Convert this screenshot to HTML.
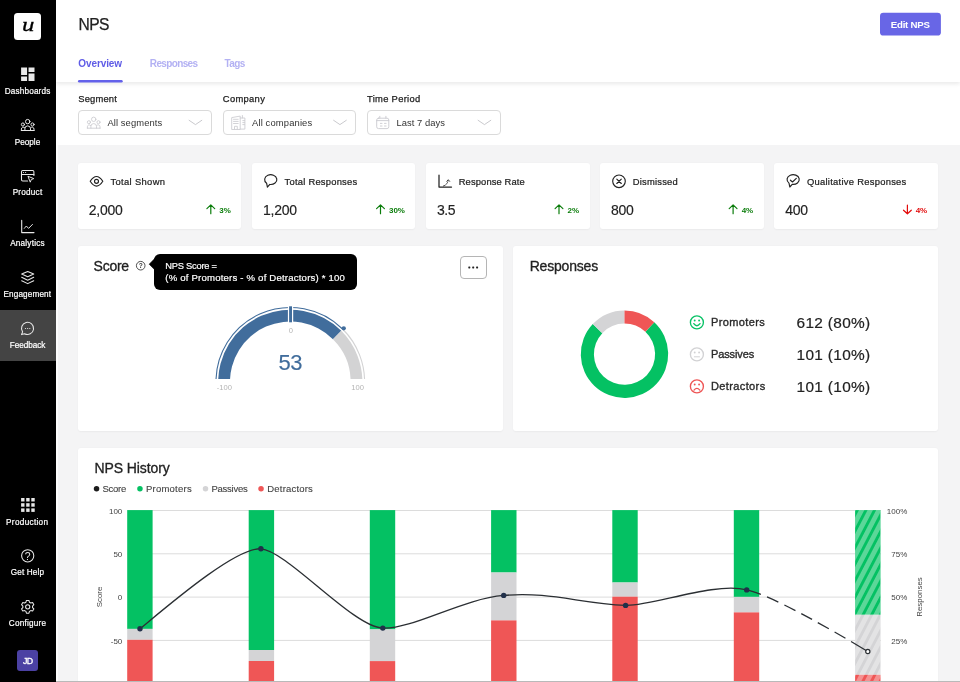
<!DOCTYPE html>
<html lang="en">
<head>
<meta charset="utf-8">
<title>NPS</title>
<style>
*{box-sizing:border-box;margin:0;padding:0}
html,body{width:960px;height:682px;overflow:hidden;background:#f4f4f5}
body{position:relative;font-family:"Liberation Sans",sans-serif;color:#222}
#wrap{position:absolute;left:0;top:0;width:960px;height:682px;will-change:transform}
.t{position:absolute;white-space:nowrap;line-height:1;z-index:6}
svg{position:absolute;overflow:visible;z-index:6}
#side{position:absolute;left:0;top:0;width:56px;height:682px;background:#000;z-index:5}
#edge{position:absolute;left:56px;top:0;width:2px;height:682px;background:#fdfdfd;z-index:1}
#active{position:absolute;left:0;top:309.5px;width:56px;height:51px;background:#444;z-index:5}
#logo{position:absolute;left:14px;top:12.6px;width:27px;height:27.2px;background:#fff;border-radius:3.5px;z-index:6}
#avatar{position:absolute;left:17.3px;top:649.5px;width:21px;height:21px;border-radius:3px;background:#4b41a3;z-index:6}
#head{position:absolute;left:56px;top:0;width:904px;height:82px;background:#fff;box-shadow:0 1.5px 4px rgba(0,0,0,.085);z-index:3}
#filters{position:absolute;left:56px;top:82px;width:904px;height:63.2px;background:#fff;z-index:2}
.sel{position:absolute;top:110px;width:133.5px;height:24.5px;border:1px solid #dadada;border-radius:4px;background:#fff;z-index:4}
.card{position:absolute;background:#fff;border-radius:3px;box-shadow:0 .5px 2px rgba(0,0,0,.045);z-index:1}
#tip{position:absolute;left:154px;top:253.5px;width:202.5px;height:36px;border-radius:6px;background:#000;z-index:6}
#more{position:absolute;left:460px;top:256px;width:26.5px;height:22.5px;border:1px solid #b5b5b5;border-radius:4px;background:#fff;z-index:6}
#bottomline{position:absolute;left:56px;top:680.6px;width:904px;height:1.4px;background:#b9b9b9;z-index:7}
</style>
</head>
<body>
<div id="wrap">
<!-- ============ SIDEBAR ============ -->
<div id="side"></div>
<div id="edge"></div>
<div id="active"></div>
<div id="logo"></div>
<span class="t" style="left:22.3px;top:14.6px;font-family:'Liberation Serif',serif;font-style:italic;font-size:19.5px;color:#000;z-index:7;transform-origin:0 0;transform:scaleX(1.27);-webkit-text-stroke:.3px">u</span>
<svg width="56" height="682" viewBox="0 0 56 682" style="left:0;top:0">
<path transform="translate(18.87 65.27) scale(0.7444)" fill="#e8e8e8" d="M3 13h8V3H3v10zm0 8h8v-6H3v6zm10 0h8V11h-8v10zm0-18v6h8V3h-8z"/>
<g transform="translate(0 0)" fill="none" stroke="#e8e8e8" stroke-width="1.0" stroke-linecap="round" stroke-linejoin="round">
<circle cx="27.7" cy="121.6" r="2.2"/><circle cx="22.9" cy="124.5" r="1.55"/><circle cx="32.5" cy="124.5" r="1.55"/>
<path d="M24.9 130.4v-1.7a2.8 2.8 0 0 1 5.6 0v1.7"/><path d="M21.4 130.4v-1.3a1.9 1.9 0 0 1 3.4-1.2"/><path d="M34 130.4v-1.3a1.9 1.9 0 0 0-3.4-1.2"/><path d="M21.3 130.5H34.2"/></g>
<g fill="none" stroke="#e8e8e8" stroke-width="1.05" stroke-linecap="round" stroke-linejoin="round">
<path d="M27.6 181H22.7a1.2 1.2 0 0 1-1.2-1.2V171.7a1.2 1.2 0 0 1 1.2-1.2H32.7a1.2 1.2 0 0 1 1.2 1.2V175.4"/><path d="M21.5 174.5H33.9"/>
<path d="M28.3 176.4L33.8 178.6L31.3 179.5L30.4 181.8Z" stroke-width=".95"/></g>
<circle cx="23.5" cy="172.5" r=".6" fill="#e8e8e8"/><circle cx="25.6" cy="172.5" r=".6" fill="#e8e8e8"/>
<g fill="none" stroke="#e8e8e8" stroke-width="1.1" stroke-linecap="round" stroke-linejoin="round"><path d="M21.7 220.4V232.6H34"/><path d="M24.3 228.4L26.3 226L28.6 228.4L32.5 224.4" stroke-width=".95"/></g>
<g fill="none" stroke="#e8e8e8" stroke-width="1.05" stroke-linecap="round" stroke-linejoin="round"><path d="M27.7 271.5L33.7 274.1L27.7 276.7L21.7 274.1Z"/><path d="M21.7 277.3L27.7 280.2L33.7 277.3"/><path d="M21.7 280.7L27.7 283.6L33.7 280.7"/></g>
<path d="M22.6 331.9A6.05 6.05 0 1 1 24.6 333.7L21.5 334.6Z" fill="none" stroke="#e8e8e8" stroke-width="1.05" stroke-linejoin="round"/>
<circle cx="25.5" cy="328.5" r=".62" fill="#e8e8e8"/>
<circle cx="27.65" cy="328.5" r=".62" fill="#e8e8e8"/>
<circle cx="29.8" cy="328.5" r=".62" fill="#e8e8e8"/>
<rect x="21.1" y="498.0" width="3.4" height="3.5" fill="#e8e8e8"/>
<rect x="26.2" y="498.0" width="3.4" height="3.5" fill="#e8e8e8"/>
<rect x="31.3" y="498.0" width="3.4" height="3.5" fill="#e8e8e8"/>
<rect x="21.1" y="503.2" width="3.4" height="3.5" fill="#e8e8e8"/>
<rect x="26.2" y="503.2" width="3.4" height="3.5" fill="#e8e8e8"/>
<rect x="31.3" y="503.2" width="3.4" height="3.5" fill="#e8e8e8"/>
<rect x="21.1" y="508.4" width="3.4" height="3.5" fill="#e8e8e8"/>
<rect x="26.2" y="508.4" width="3.4" height="3.5" fill="#e8e8e8"/>
<rect x="31.3" y="508.4" width="3.4" height="3.5" fill="#e8e8e8"/>
<circle cx="27.7" cy="555.8" r="6.1" fill="none" stroke="#e8e8e8" stroke-width="1.05"/>
<text x="27.7" y="559.9" text-anchor="middle" font-family="Liberation Sans, sans-serif" font-size="10.4" fill="#e8e8e8">?</text>
<path d="M29.46 602.23 L28.94 600.42 L26.46 600.42 L25.94 602.23 L24.62 602.99 L22.79 602.54 L21.55 604.68 L22.86 606.03 L22.86 607.57 L21.55 608.92 L22.79 611.06 L24.62 610.61 L25.94 611.37 L26.46 613.18 L28.94 613.18 L29.46 611.37 L30.78 610.61 L32.61 611.06 L33.85 608.92 L32.54 607.57 L32.54 606.03 L33.85 604.68 L32.61 602.54 L30.78 602.99Z" fill="none" stroke="#e8e8e8" stroke-width="1.05" stroke-linejoin="round"/><circle cx="27.7" cy="606.8" r="2.1" fill="none" stroke="#e8e8e8" stroke-width="1.05"/>
</svg>
<span class="t" style="left:4.8px;top:88px;font-size:8.2px;letter-spacing:0.15px;color:#fff;-webkit-text-stroke:0.2px;">Dashboards</span>
<span class="t" style="left:14.7px;top:139px;font-size:8.2px;color:#fff;-webkit-text-stroke:0.2px;">People</span>
<span class="t" style="left:12.7px;top:189px;font-size:8.2px;letter-spacing:0.21px;color:#fff;-webkit-text-stroke:0.2px;">Product</span>
<span class="t" style="left:10.2px;top:240px;font-size:8.2px;letter-spacing:0.2px;color:#fff;-webkit-text-stroke:0.2px;">Analytics</span>
<span class="t" style="left:3.4px;top:291px;font-size:8.2px;letter-spacing:0.14px;color:#fff;-webkit-text-stroke:0.2px;">Engagement</span>
<span class="t" style="left:9.7px;top:342px;font-size:8.2px;letter-spacing:-0.03px;color:#fff;-webkit-text-stroke:0.2px;">Feedback</span>
<span class="t" style="left:6.1px;top:519px;font-size:8.2px;letter-spacing:0.31px;color:#fff;-webkit-text-stroke:0.2px;">Production</span>
<span class="t" style="left:10.75px;top:569px;font-size:8.2px;letter-spacing:0.14px;color:#fff;-webkit-text-stroke:0.2px;">Get Help</span>
<span class="t" style="left:8.75px;top:620px;font-size:8.2px;letter-spacing:0.22px;color:#fff;-webkit-text-stroke:0.2px;">Configure</span>
<div id="avatar"></div>
<span class="t" style="left:23.1px;top:657px;font-size:8.8px;letter-spacing:-0.73px;color:#fff;-webkit-text-stroke:0.3px;z-index:7;">JD</span>
<!-- ============ HEADER ============ -->
<div id="head"></div>
<div id="filters"></div>
<span class="t" style="left:78.5px;top:17px;font-size:15.6px;letter-spacing:-0.59px;color:#222;-webkit-text-stroke:0.25px;">NPS</span>
<span class="t" style="left:890.8px;top:20px;font-size:9.7px;letter-spacing:-0.25px;color:#fff;font-weight:bold;z-index:7;">Edit NPS</span>
<span class="t" style="left:78.3px;top:59px;font-size:10px;letter-spacing:-0.1px;color:#5f5ce6;font-weight:bold;">Overview</span>
<span class="t" style="left:149.8px;top:59px;font-size:10px;letter-spacing:-0.64px;color:#b3b1f3;font-weight:bold;">Responses</span>
<span class="t" style="left:224.5px;top:59px;font-size:10px;letter-spacing:-0.57px;color:#b3b1f3;font-weight:bold;">Tags</span>
<span class="t" style="left:78.3px;top:94px;font-size:9.4px;letter-spacing:0.17px;color:#222;-webkit-text-stroke:0.25px;">Segment</span>
<span class="t" style="left:222.8px;top:94px;font-size:9.4px;letter-spacing:0.32px;color:#222;-webkit-text-stroke:0.25px;">Company</span>
<span class="t" style="left:367px;top:94px;font-size:9.4px;letter-spacing:0.3px;color:#222;-webkit-text-stroke:0.25px;">Time Period</span>
<div class="sel" style="left:78px"></div>
<div class="sel" style="left:222.5px"></div>
<div class="sel" style="left:367px"></div>
<span class="t" style="left:107.4px;top:118px;font-size:9.4px;letter-spacing:0.1px;color:#333;">All segments</span>
<span class="t" style="left:252px;top:118px;font-size:9.4px;letter-spacing:0.15px;color:#333;">All companies</span>
<span class="t" style="left:396.6px;top:118px;font-size:9.4px;letter-spacing:0.04px;color:#333;">Last 7 days</span>
<svg width="960" height="150" viewBox="0 0 960 150" style="left:0;top:0">
<rect x="880" y="12.65" width="60.9" height="22.9" rx="3.4" fill="#6866e6"/>
<rect x="78" y="80" width="44.7" height="2.45" rx="1.2" fill="#6361ea"/>
<g transform="translate(66 -2.3)" fill="none" stroke="#cbcbd0" stroke-width="0.85" stroke-linecap="round" stroke-linejoin="round">
<circle cx="27.7" cy="121.6" r="2.2"/><circle cx="22.9" cy="124.5" r="1.55"/><circle cx="32.5" cy="124.5" r="1.55"/>
<path d="M24.9 130.4v-1.7a2.8 2.8 0 0 1 5.6 0v1.7"/><path d="M21.4 130.4v-1.3a1.9 1.9 0 0 1 3.4-1.2"/><path d="M34 130.4v-1.3a1.9 1.9 0 0 0-3.4-1.2"/><path d="M21.3 130.5H34.2"/></g>
<g fill="none" stroke="#cbcbd0" stroke-width=".85" stroke-linejoin="round" stroke-linecap="round">
<path d="M231.7 129.1V117.6L240.2 116.1V129.1Z"/><path d="M233.5 119.3H238.2M233.5 121.4H238.2M233.5 123.5H238.2"/><path d="M234.5 129.1V126.3H237.3V129.1"/>
<path d="M240.2 118H244.9V129.1H240.2"/><path d="M242.4 118V115.5"/><path d="M242.8 120.6H244.6M242.8 122.6H244.6M242.8 124.6H244.6"/></g>
<g fill="none" stroke="#cbcbd0" stroke-width=".9" stroke-linecap="round">
<rect x="376.7" y="118.2" width="12.1" height="10.4" rx="1.8"/><path d="M376.7 120.6H388.8"/><path d="M379.8 116.3V118.2M385.9 116.3V118.2"/>
<path d="M380.4 123.4H382M384.5 123.4H386.1M380.4 126H382M384.5 126H386.1"/></g>
<path d="M189.1 120.3l6.35 4.3l6.35-4.3" fill="none" stroke="#c6c6ca" stroke-width=".95" stroke-linecap="round" stroke-linejoin="round"/>
<path d="M333.6 120.3l6.35 4.3l6.35-4.3" fill="none" stroke="#c6c6ca" stroke-width=".95" stroke-linecap="round" stroke-linejoin="round"/>
<path d="M478.1 120.3l6.35 4.3l6.35-4.3" fill="none" stroke="#c6c6ca" stroke-width=".95" stroke-linecap="round" stroke-linejoin="round"/>
</svg>
<!-- ============ STAT CARDS ============ -->
<div class="card" style="left:78px;top:163px;width:163.4px;height:66px"></div>
<span class="t" style="left:110.5px;top:177px;font-size:9.4px;letter-spacing:0.34px;color:#222;-webkit-text-stroke:0.22px;">Total Shown</span>
<span class="t" style="left:88.8px;top:203px;font-size:14px;letter-spacing:-0.25px;color:#222;-webkit-text-stroke:0.15px;">2,000</span>
<span class="t" style="right:729.28px;top:207px;font-size:8px;letter-spacing:-0.08px;color:#0b7d0b;font-weight:bold;">3%</span>
<div class="card" style="left:252.1px;top:163px;width:163.4px;height:66px"></div>
<span class="t" style="left:284.6px;top:177px;font-size:9.4px;letter-spacing:0.23px;color:#222;-webkit-text-stroke:0.22px;">Total Responses</span>
<span class="t" style="left:262.9px;top:203px;font-size:14px;letter-spacing:-0.21px;color:#222;-webkit-text-stroke:0.15px;">1,200</span>
<span class="t" style="right:555.17px;top:207px;font-size:8px;letter-spacing:-0.07px;color:#0b7d0b;font-weight:bold;">30%</span>
<div class="card" style="left:426.2px;top:163px;width:163.4px;height:66px"></div>
<span class="t" style="left:458.7px;top:177px;font-size:9.4px;letter-spacing:0.12px;color:#222;-webkit-text-stroke:0.22px;">Response Rate</span>
<span class="t" style="left:437px;top:203px;font-size:14px;letter-spacing:-0.49px;color:#222;-webkit-text-stroke:0.15px;">3.5</span>
<span class="t" style="right:381.08px;top:207px;font-size:8px;letter-spacing:-0.08px;color:#0b7d0b;font-weight:bold;">2%</span>
<div class="card" style="left:600.3px;top:163px;width:163.4px;height:66px"></div>
<span class="t" style="left:632.8px;top:177px;font-size:9.4px;letter-spacing:0.21px;color:#222;-webkit-text-stroke:0.22px;">Dismissed</span>
<span class="t" style="left:611.1px;top:203px;font-size:14px;letter-spacing:-0.29px;color:#222;-webkit-text-stroke:0.15px;">800</span>
<span class="t" style="right:206.98px;top:207px;font-size:8px;letter-spacing:-0.08px;color:#0b7d0b;font-weight:bold;">4%</span>
<div class="card" style="left:774.4px;top:163px;width:163.4px;height:66px"></div>
<span class="t" style="left:806.9px;top:177px;font-size:9.4px;letter-spacing:0.28px;color:#222;-webkit-text-stroke:0.22px;">Qualitative Responses</span>
<span class="t" style="left:785.2px;top:203px;font-size:14px;letter-spacing:-0.29px;color:#222;-webkit-text-stroke:0.15px;">400</span>
<span class="t" style="right:32.98px;top:207px;font-size:8px;letter-spacing:-0.18px;color:#e30b0b;font-weight:bold;">4%</span>
<svg width="960" height="240" viewBox="0 0 960 240" style="left:0;top:0">
<path d="M210.80 213.7V205.2M206.90 208.6L210.80 204.9L214.70 208.6" fill="none" stroke="#0b7d0b" stroke-width="1.2" stroke-linecap="round" stroke-linejoin="round"/>
<path d="M380.50 213.7V205.2M376.60 208.6L380.50 204.9L384.40 208.6" fill="none" stroke="#0b7d0b" stroke-width="1.2" stroke-linecap="round" stroke-linejoin="round"/>
<path d="M559.00 213.7V205.2M555.10 208.6L559.00 204.9L562.90 208.6" fill="none" stroke="#0b7d0b" stroke-width="1.2" stroke-linecap="round" stroke-linejoin="round"/>
<path d="M733.10 213.7V205.2M729.20 208.6L733.10 204.9L737.00 208.6" fill="none" stroke="#0b7d0b" stroke-width="1.2" stroke-linecap="round" stroke-linejoin="round"/>
<path d="M907.40 205.2V213.5M903.50 210.2L907.40 213.8L911.30 210.2" fill="none" stroke="#e30b0b" stroke-width="1.2" stroke-linecap="round" stroke-linejoin="round"/>
<g fill="none" stroke="#222" stroke-width="1.15" stroke-linecap="round" stroke-linejoin="round"><path d="M90.2 181.3Q96.5 171.6 102.8 181.3Q96.5 191 90.2 181.3Z"/><circle cx="96.5" cy="181.3" r="2"/></g>
<g fill="none" stroke="#222" stroke-width="1.15" stroke-linecap="round" stroke-linejoin="round"><path d="M266.60 183.20A6.1 4.9 0 1 1 269.80 184.45L267.40 187.10Z"/></g>
<g fill="none" stroke="#222" stroke-width="1.15" stroke-linecap="round" stroke-linejoin="round"><path d="M439 175.2V187.1H451.5" stroke-width="1.25"/><path d="M443.4 186Q447.4 184.6 448.1 180.6" stroke-width=".8" stroke-dasharray="1.3 1"/><path d="M446.7 181.3L448.3 179.7L449.7 181.4" stroke-width=".8"/></g>
<g fill="none" stroke="#222" stroke-width="1.15" stroke-linecap="round" stroke-linejoin="round"><circle cx="619" cy="181.3" r="6.3"/><path d="M616.8 179.1L621.3 183.5M621.3 179.1L616.8 183.5"/></g>
<g fill="none" stroke="#222" stroke-width="1.15" stroke-linecap="round" stroke-linejoin="round"><path d="M789.00 183.10A6.1 4.9 0 1 1 792.20 184.35L789.80 187.00Z"/><path d="M790.4 180.2L792.5 182L796.3 178.3"/></g>
</svg>
<!-- ============ SCORE CARD ============ -->
<div class="card" style="left:78px;top:245.5px;width:424.5px;height:185.5px"></div>
<span class="t" style="left:93.6px;top:259px;font-size:14px;letter-spacing:-0.27px;color:#222;-webkit-text-stroke:0.3px;">Score</span>
<div id="tip"></div>
<span class="t" style="left:165.3px;top:262px;font-size:9.3px;letter-spacing:-0.23px;color:#fff;-webkit-text-stroke:0.2px;z-index:7;">NPS Score =</span>
<span class="t" style="left:165.3px;top:273px;font-size:9.6px;letter-spacing:0.19px;color:#fff;-webkit-text-stroke:0.2px;z-index:7;">(% of Promoters - % of Detractors) * 100</span>
<div id="more"></div>
<svg width="960" height="440" viewBox="0 0 960 440" style="left:0;top:0">
<defs><clipPath id="gclip"><rect x="200" y="290" width="180" height="88.9"/></clipPath></defs>
<path d="M149.2 264.2L155.2 258.1V270.3Z" fill="#000" stroke="#000" stroke-width=".6" stroke-linejoin="round"/>
<circle cx="140.7" cy="265.7" r="4.3" fill="none" stroke="#333" stroke-width=".85"/>
<text x="140.7" y="268.1" text-anchor="middle" font-family="Liberation Sans, sans-serif" font-size="6.6" font-weight="bold" fill="#333">?</text>
<rect x="468.3" y="266.4" width="2" height="2" rx=".6" fill="#222"/>
<rect x="472.2" y="266.4" width="2" height="2" rx=".6" fill="#222"/>
<rect x="476.1" y="266.4" width="2" height="2" rx=".6" fill="#222"/>
<g clip-path="url(#gclip)">
<path d="M218.27 384.94A72.1 72.1 0 0 1 341.28 330.82L332.94 339.16A60.3 60.3 0 0 0 230.06 384.43Z" fill="#416d9c"/>
<path d="M341.28 330.82A72.1 72.1 0 0 1 362.33 384.94L350.54 384.43A60.3 60.3 0 0 0 332.94 339.16Z" fill="#d3d3d4"/>
<path d="M216.07 385.04A74.3 74.3 0 0 1 342.84 329.26" fill="none" stroke="#416d9c" stroke-width="1.1"/>
<path d="M342.84 329.26A74.3 74.3 0 0 1 364.53 385.04" fill="none" stroke="#d3d3d4" stroke-width="1.1"/>
</g>
<rect x="287.9" y="305.5" width="5.3" height="17.5" fill="#fff"/>
<rect x="289.1" y="306.3" width="2.9" height="16" fill="#416d9c"/>
<circle cx="343.76" cy="328.34" r="2.15" fill="#416d9c"/>
<text x="290.8" y="332.8" text-anchor="middle" font-family="Liberation Sans, sans-serif" font-size="7.6" fill="#b4b4b4">0</text>
<text x="224.4" y="389.9" text-anchor="middle" font-family="Liberation Sans, sans-serif" font-size="7.6" fill="#b4b4b4">-100</text>
<text x="357.7" y="389.9" text-anchor="middle" font-family="Liberation Sans, sans-serif" font-size="7.6" fill="#b4b4b4">100</text>
</svg>
<span class="t" style="left:278.4px;top:352px;font-size:22px;letter-spacing:-0.34px;color:#416d9c;-webkit-text-stroke:0.15px;">53</span>
<!-- ============ RESPONSES CARD ============ -->
<div class="card" style="left:513.2px;top:245.5px;width:424.8px;height:185.5px"></div>
<span class="t" style="left:529.7px;top:259px;font-size:14px;letter-spacing:-0.19px;color:#222;-webkit-text-stroke:0.3px;">Responses</span>
<svg width="960" height="440" viewBox="0 0 960 440" style="left:0;top:0">
<path d="M654.30 322.24A43.7 43.7 0 1 1 592.80 324.12L602.30 333.14A30.6 30.6 0 1 0 645.37 331.82Z" fill="#04c163"/>
<path d="M592.80 324.12A43.7 43.7 0 0 1 624.50 310.50L624.50 323.60A30.6 30.6 0 0 0 602.30 333.14Z" fill="#d4d4d6"/>
<path d="M624.50 310.50A43.7 43.7 0 0 1 654.30 322.24L645.37 331.82A30.6 30.6 0 0 0 624.50 323.60Z" fill="#ef5656"/>
<g fill="none" stroke="#09c266" stroke-width="1.35" stroke-linecap="round"><circle cx="696.9" cy="322.4" r="6.5"/><path d="M693.8 323.59999999999997Q696.9 327.79999999999995 700.0 323.59999999999997"/></g><circle cx="694.6999999999999" cy="320.5" r=".95" fill="#09c266"/><circle cx="699.1" cy="320.5" r=".95" fill="#09c266"/>
<g fill="none" stroke="#d2d2d4" stroke-width="1.35" stroke-linecap="round"><circle cx="696.9" cy="354.4" r="6.5"/><path d="M694.3 356.79999999999995H699.5" stroke-width="1"/></g><circle cx="694.6999999999999" cy="352.5" r=".95" fill="#d2d2d4"/><circle cx="699.1" cy="352.5" r=".95" fill="#d2d2d4"/>
<g fill="none" stroke="#ee5555" stroke-width="1.35" stroke-linecap="round"><circle cx="696.9" cy="386.4" r="6.5"/><path d="M694.0 390.09999999999997Q696.9 386.7 699.8 390.09999999999997"/></g><circle cx="694.6999999999999" cy="384.5" r=".95" fill="#ee5555"/><circle cx="699.1" cy="384.5" r=".95" fill="#ee5555"/>
</svg>
<span class="t" style="left:710.9px;top:317px;font-size:11px;letter-spacing:0.4px;color:#2a2a2a;-webkit-text-stroke:0.35px;">Promoters</span>
<span class="t" style="left:796.6px;top:315px;font-size:15.4px;letter-spacing:0.33px;color:#222;-webkit-text-stroke:0.2px;">612 (80%)</span>
<span class="t" style="left:710.9px;top:349px;font-size:11px;letter-spacing:-0.09px;color:#2a2a2a;-webkit-text-stroke:0.35px;">Passives</span>
<span class="t" style="left:796.6px;top:347px;font-size:15.4px;letter-spacing:0.33px;color:#222;-webkit-text-stroke:0.2px;">101 (10%)</span>
<span class="t" style="left:710.9px;top:381px;font-size:11px;letter-spacing:0.39px;color:#2a2a2a;-webkit-text-stroke:0.35px;">Detractors</span>
<span class="t" style="left:796.6px;top:379px;font-size:15.4px;letter-spacing:0.33px;color:#222;-webkit-text-stroke:0.2px;">101 (10%)</span>
<!-- ============ NPS HISTORY CARD ============ -->
<div class="card" style="left:78px;top:448px;width:860px;height:260px"></div>
<span class="t" style="left:94.4px;top:461px;font-size:14px;letter-spacing:-0.08px;color:#222;-webkit-text-stroke:0.3px;">NPS History</span>
<span class="t" style="left:102.5px;top:484px;font-size:9.5px;letter-spacing:-0.26px;color:#444;-webkit-text-stroke:0.12px;">Score</span>
<span class="t" style="left:145.9px;top:484px;font-size:9.5px;letter-spacing:0.25px;color:#444;-webkit-text-stroke:0.12px;">Promoters</span>
<span class="t" style="left:211.5px;top:484px;font-size:9.5px;letter-spacing:-0.25px;color:#444;-webkit-text-stroke:0.12px;">Passives</span>
<span class="t" style="left:267.3px;top:484px;font-size:9.5px;letter-spacing:0.19px;color:#444;-webkit-text-stroke:0.12px;">Detractors</span>
<svg width="960" height="682" viewBox="0 0 960 682" style="left:0;top:0">
<defs><pattern id="hatch" width="7.63" height="10" patternUnits="userSpaceOnUse" patternTransform="rotate(27.5) translate(5.55 0)"><rect x="0" y="0" width="4.75" height="10" fill="#fff" fill-opacity=".35"/></pattern></defs>
<circle cx="96.55" cy="488.7" r="2.75" fill="#1c1c1c"/>
<circle cx="139.95" cy="488.7" r="2.75" fill="#04c163"/>
<circle cx="205.5" cy="488.7" r="2.75" fill="#d4d4d6"/>
<circle cx="261.05" cy="488.7" r="2.75" fill="#ef5656"/>
<path d="M127.5 510.50H881" stroke="#dcdcdc" stroke-width="1" fill="none"/>
<path d="M127.5 553.80H881" stroke="#dcdcdc" stroke-width="1" fill="none"/>
<path d="M127.5 597.10H881" stroke="#dcdcdc" stroke-width="1" fill="none"/>
<path d="M127.5 640.40H881" stroke="#dcdcdc" stroke-width="1" fill="none"/>
<path d="M127.5 683.70H881" stroke="#dcdcdc" stroke-width="1" fill="none"/>
<rect x="127.2" y="510.1" width="25.4" height="118.8" fill="#04c163"/>
<rect x="127.2" y="628.9" width="25.4" height="10.9" fill="#d4d4d6"/>
<rect x="127.2" y="639.8" width="25.4" height="50.2" fill="#ef5656"/>
<rect x="248.7" y="510.1" width="25.4" height="139.9" fill="#04c163"/>
<rect x="248.7" y="650" width="25.4" height="11.0" fill="#d4d4d6"/>
<rect x="248.7" y="661" width="25.4" height="29.0" fill="#ef5656"/>
<rect x="369.8" y="510.1" width="25.4" height="119.3" fill="#04c163"/>
<rect x="369.8" y="629.4" width="25.4" height="31.7" fill="#d4d4d6"/>
<rect x="369.8" y="661.1" width="25.4" height="28.9" fill="#ef5656"/>
<rect x="491.1" y="510.1" width="25.4" height="62.4" fill="#04c163"/>
<rect x="491.1" y="572.5" width="25.4" height="47.9" fill="#d4d4d6"/>
<rect x="491.1" y="620.4" width="25.4" height="69.6" fill="#ef5656"/>
<rect x="612.3" y="510.1" width="25.4" height="72.4" fill="#04c163"/>
<rect x="612.3" y="582.5" width="25.4" height="14.2" fill="#d4d4d6"/>
<rect x="612.3" y="596.7" width="25.4" height="93.3" fill="#ef5656"/>
<rect x="733.8" y="510.1" width="25.4" height="86.8" fill="#04c163"/>
<rect x="733.8" y="596.9" width="25.4" height="15.5" fill="#d4d4d6"/>
<rect x="733.8" y="612.4" width="25.4" height="77.6" fill="#ef5656"/>
<rect x="855.1" y="510.1" width="25.4" height="104.7" fill="#04c163"/>
<rect x="855.1" y="614.8" width="25.4" height="60.0" fill="#d4d4d6"/>
<rect x="855.1" y="674.8" width="25.4" height="15.2" fill="#ef5656"/>
<rect x="855.1" y="510.1" width="25.4" height="180" fill="url(#hatch)"/>
<path d="M140 628.8C172.1 602.2 236.2 547.4 260.9 548.8C286.7 550.3 352.5 626.7 382.8 628.1C412.3 629.4 462.7 598.7 503.7 595.4C550.8 591.6 578.6 603.2 625.6 605.4C651.5 606.6 714.2 581.5 746.7 589.9" fill="none" stroke="#2b2f33" stroke-width="1.3"/>
<path d="M746.7 589.9C769.2 594.4 825.3 626 867.8 651.5" fill="none" stroke="#2b2f33" stroke-width="1.3" stroke-dasharray="15.2 6.5 12.5 6.5 12.5 6.5 12.5 6.5 12.5 6.5 12.5 6.5 40"/>
<circle cx="140" cy="628.8" r="2.7" fill="#21304a"/>
<circle cx="260.9" cy="548.8" r="2.7" fill="#21304a"/>
<circle cx="382.8" cy="628.1" r="2.7" fill="#21304a"/>
<circle cx="503.7" cy="595.4" r="2.7" fill="#21304a"/>
<circle cx="625.6" cy="605.4" r="2.7" fill="#21304a"/>
<circle cx="746.7" cy="589.9" r="2.7" fill="#21304a"/>
<circle cx="867.8" cy="651.5" r="2.1" fill="#fff" stroke="#2b2f33" stroke-width="1.2"/>
</svg>
<span class="t" style="right:837.7px;top:508px;font-size:8px;color:#444;">100</span>
<span class="t" style="right:52.7px;top:508px;font-size:8px;color:#444;">100%</span>
<span class="t" style="right:837.7px;top:551px;font-size:8px;color:#444;">50</span>
<span class="t" style="right:52.7px;top:551px;font-size:8px;color:#444;">75%</span>
<span class="t" style="right:837.7px;top:594px;font-size:8px;color:#444;">0</span>
<span class="t" style="right:52.7px;top:594px;font-size:8px;color:#444;">50%</span>
<span class="t" style="right:837.7px;top:638px;font-size:8px;color:#444;">-50</span>
<span class="t" style="right:52.7px;top:638px;font-size:8px;color:#444;">25%</span>
<span class="t" style="right:837.7px;top:681px;font-size:8px;color:#444;">-100</span>
<span class="t" style="right:52.7px;top:681px;font-size:8px;color:#444;">0%</span>
<span class="t" style="left:100.3px;top:597px;font-size:7.9px;color:#444;transform:translate(-50%,-50%) rotate(-90deg)">Score</span>
<span class="t" style="left:919.6px;top:597px;font-size:7.9px;color:#444;transform:translate(-50%,-50%) rotate(-90deg)">Responses</span>
<div id="bottomline"></div>
</div>
</body>
</html>
